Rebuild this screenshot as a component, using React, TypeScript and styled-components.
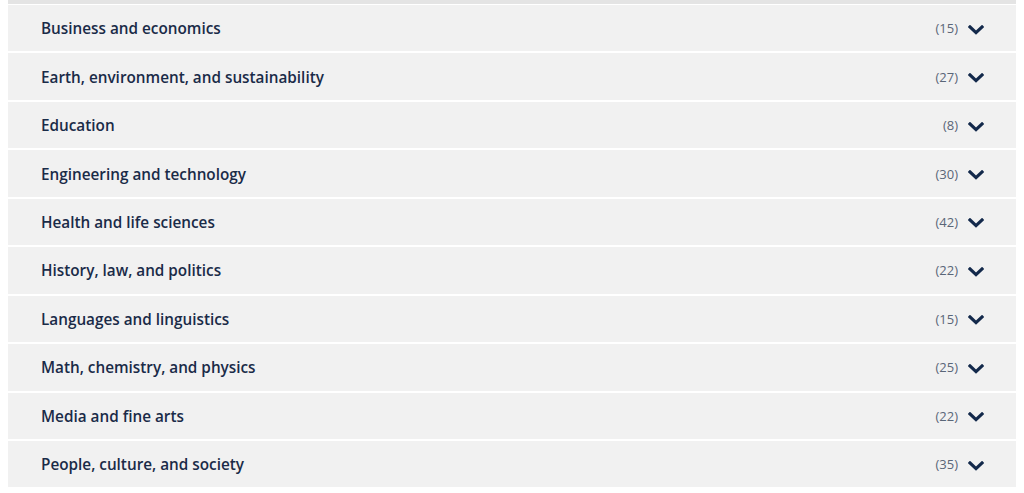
import React from "react";
import styled, { createGlobalStyle } from "styled-components";

const Global = createGlobalStyle`
  html, body { margin: 0; padding: 0; background: #ffffff; }
  body { padding: 0 8px; font-family: "Open Sans", "Noto Sans", sans-serif; }
`;

const List = styled.ul`
  list-style: none;
  margin: 0;
  padding: 1px 0 0;
  border-top: 4px solid #e4e4e4;
  display: flex;
  flex-direction: column;
  gap: 2px;
`;

const Row = styled.li`
  display: flex;
  align-items: center;
  height: 46.44px;
  background: #f1f1f1;
  padding: 0 32px 0 33px;
  box-sizing: border-box;
`;

const Title = styled.span`
  flex: 1;
  font-size: 15.3px;
  font-weight: 600;
  color: #1a2b48;
`;

const Count = styled.span`
  font-size: 13px;
  color: #5a6678;
  margin-right: 10px;
`;

const Icon = styled.svg`
  display: block;
  margin-top: 3px;
`;

const Chevron = () => (
  <Icon width="16" height="10" viewBox="0 0 16 10" aria-hidden>
    <path d="M2 2 L8 7.6 L14 2" fill="none" stroke="#13294b" strokeWidth="3.2" strokeLinecap="square" />
  </Icon>
);

const items: [string, number][] = [
  ["Business and economics", 15],
  ["Earth, environment, and sustainability", 27],
  ["Education", 8],
  ["Engineering and technology", 30],
  ["Health and life sciences", 42],
  ["History, law, and politics", 22],
  ["Languages and linguistics", 15],
  ["Math, chemistry, and physics", 25],
  ["Media and fine arts", 22],
  ["People, culture, and society", 35],
];

export default function App() {
  return (
    <>
      <Global />
      <List>
        {items.map(([t, n]) => (
          <Row key={t}>
            <Title>{t}</Title>
            <Count>({n})</Count>
            <Chevron />
          </Row>
        ))}
      </List>
    </>
  );
}
